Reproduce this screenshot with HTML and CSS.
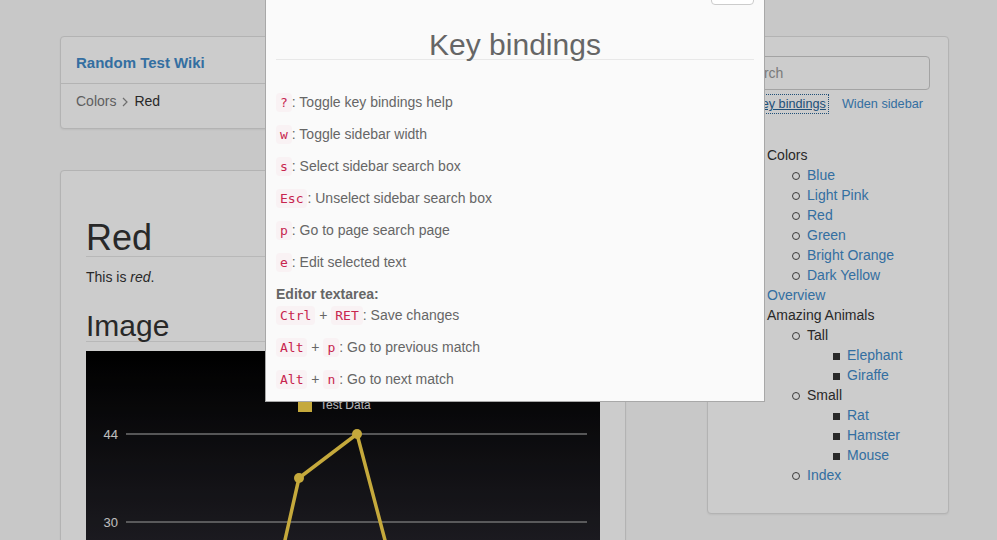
FILE: index.html
```html
<!DOCTYPE html>
<html lang="en">
<head>
<meta charset="utf-8">
<title>Red - Random Test Wiki</title>
<link rel="stylesheet" href="styles.css">
</head>
<body>
<div class="page">
  <main class="main-col">
    <section class="card nav-card">
      <div class="card-head"><a class="brand" href="#">Random Test Wiki</a></div>
      <div class="crumbs">
        <a class="crumb" href="#">Colors</a>
        <svg class="chev" width="6" height="10" viewBox="0 0 6 10"><polyline points="1,1 5,5 1,9" fill="none" stroke="#8a8a8a" stroke-width="1.2"/></svg>
        <span class="current">Red</span>
      </div>
    </section>
    <article class="card content-card">
      <h1 class="page-title">Red</h1>
      <p class="lead-text">This is <em>red</em>.</p>
      <h2 class="section-title">Image</h2>
      <div class="chart">
        <svg width="514" height="320" viewBox="0 0 514 320">
          <defs>
            <linearGradient id="chartbg" gradientUnits="userSpaceOnUse" x1="0" y1="0" x2="0" y2="200">
              <stop offset="0" stop-color="#000000"/>
              <stop offset="1" stop-color="#24232a"/>
            </linearGradient>
          </defs>
          <rect x="0" y="0" width="514" height="320" fill="url(#chartbg)"/>
          <rect x="212" y="47" width="14" height="14" fill="#f7d44b"/>
          <text x="234" y="58" fill="#e6e6e6" font-family="Liberation Sans, Arial, sans-serif" font-size="12">Test Data</text>
          <line x1="40" y1="83" x2="501" y2="83" stroke="#8c8c8c" stroke-width="1.5"/>
          <text x="32" y="88" text-anchor="end" fill="#eeeeee" font-family="Liberation Sans, Arial, sans-serif" font-size="13">44</text>
          <line x1="40" y1="171" x2="501" y2="171" stroke="#8c8c8c" stroke-width="1.5"/>
          <text x="32" y="176" text-anchor="end" fill="#eeeeee" font-family="Liberation Sans, Arial, sans-serif" font-size="13">30</text>
          <polyline points="155,384 213,127 271,83 329,303" fill="none" stroke="#f7d44b" stroke-width="3.5" stroke-linejoin="round"/>
          <circle cx="213" cy="127" r="5" fill="#f7d44b"/>
          <circle cx="271" cy="83" r="5" fill="#f7d44b"/>
        </svg>
      </div>
    </article>
  </main>
  <aside class="card sidebar">
    <input class="search" type="text" placeholder="Search">
    <div class="side-links">
      <a class="side-link focused" href="#">Key bindings</a>
      <a class="side-link" href="#">Widen sidebar</a>
    </div>
    <ul class="tree">
      <li>Colors
        <ul class="lvl2">
          <li><a href="#">Blue</a></li>
          <li><a href="#">Light Pink</a></li>
          <li><a href="#">Red</a></li>
          <li><a href="#">Green</a></li>
          <li><a href="#">Bright Orange</a></li>
          <li><a href="#">Dark Yellow</a></li>
        </ul>
      </li>
      <li><a href="#">Overview</a></li>
      <li>Amazing Animals
        <ul class="lvl2">
          <li>Tall
            <ul class="lvl3">
              <li><a href="#">Elephant</a></li>
              <li><a href="#">Giraffe</a></li>
            </ul>
          </li>
          <li>Small
            <ul class="lvl3">
              <li><a href="#">Rat</a></li>
              <li><a href="#">Hamster</a></li>
              <li><a href="#">Mouse</a></li>
            </ul>
          </li>
          <li><a href="#">Index</a></li>
        </ul>
      </li>
    </ul>
  </aside>
</div>

<div class="backdrop"></div>

<div class="modal">
  <div class="modal-head">
    <button class="close-btn" type="button" aria-label="Close"></button>
    <h2 class="modal-title">Key bindings</h2>
  </div>
  <div class="modal-body">
    <p class="row"><code>?</code>: Toggle key bindings help</p>
    <p class="row"><code>w</code>: Toggle sidebar width</p>
    <p class="row"><code>s</code>: Select sidebar search box</p>
    <p class="row"><code>Esc</code>: Unselect sidebar search box</p>
    <p class="row"><code>p</code>: Go to page search page</p>
    <p class="row"><code>e</code>: Edit selected text</p>
    <div class="group-title">Editor textarea:</div>
    <p class="row first-in-group"><code>Ctrl</code> + <code>RET</code>: Save changes</p>
    <p class="row"><code>Alt</code> + <code>p</code>: Go to previous match</p>
    <p class="row"><code>Alt</code> + <code>n</code>: Go to next match</p>
  </div>
</div>
</body>
</html>
```

FILE: styles.css
```css
html, body {
  margin: 0;
  padding: 0;
  overflow: hidden;
  height: 540px;
}

body {
  background: #fafafa;
  font-family: "Liberation Sans", Arial, sans-serif;
  font-size: 14px;
  line-height: 20px;
  color: #333;
}

a {
  color: #428bca;
  text-decoration: none;
}

.page {
  display: flex;
  align-items: flex-start;
  gap: 81px;
  padding: 36px 48px 0 60px;
}

.main-col {
  width: 566px;
  flex: none;
  display: flex;
  flex-direction: column;
  gap: 41px;
}

.card {
  background: #fff;
  border: 1px solid #e0e0e0;
  border-radius: 4px;
  box-shadow: 0 1px 2px rgba(0, 0, 0, 0.06);
  box-sizing: border-box;
}

/* nav card */
.card-head {
  padding: 16px 15px 10px;
  border-bottom: 1px solid #e0e0e0;
}

.brand {
  font-size: 15px;
  font-weight: bold;
  line-height: 20px;
}

.crumbs {
  display: flex;
  align-items: center;
  padding: 7px 15px 17px;
  line-height: 20px;
}

.crumb {
  color: #777;
}

.chev {
  margin: 1px 6px 0 6px;
}

.current {
  color: #333;
}

/* content card */
.content-card {
  padding: 25px 25px 0;
  height: 420px;
}

.page-title {
  margin: 24px 0 10px;
  font-size: 36px;
  line-height: 36px;
  font-weight: normal;
  border-bottom: 1px solid #e6e6e6;
}

.lead-text {
  margin: 0 0 24px;
}

.section-title {
  margin: 0 0 9px;
  font-size: 30px;
  line-height: 30px;
  font-weight: normal;
  border-bottom: 1px solid #e6e6e6;
}

.chart svg {
  display: block;
}

/* sidebar */
.sidebar {
  width: 242px;
  flex: none;
  padding: 19px 18px 28px;
}

.search {
  display: block;
  width: 100%;
  box-sizing: border-box;
  height: 34px;
  padding: 6px 12px;
  border: 1px solid #ccc;
  border-radius: 4px;
  font-family: "Liberation Sans", Arial, sans-serif;
  font-size: 14px;
  color: #555;
  background: #fff;
}

.search::placeholder {
  color: #999;
}

.side-links {
  display: flex;
  justify-content: flex-end;
  gap: 12px;
  padding-right: 5px;
  margin-top: 5px;
  font-size: 12.7px;
  line-height: 18px;
}

.side-link {
  padding: 0 2px;
}

.side-link.focused {
  color: #2a6496;
  text-decoration: underline;
  outline: 1px dotted #2a6496;
}

.tree {
  list-style: none;
  margin: 32px 0 0;
  padding: 0 0 0 41px;
}

.tree ul {
  list-style: none;
  margin: 0;
  padding: 0 0 0 40px;
}

.lvl2 > li::before {
  content: "";
  display: inline-block;
  box-sizing: border-box;
  width: 8px;
  height: 8px;
  margin: 0 7px 0 -15px;
  border: 1.4px solid #4a4a4a;
  border-radius: 50%;
  vertical-align: middle;
}

.lvl3 > li::before {
  content: "";
  display: inline-block;
  width: 7px;
  height: 7px;
  margin: 0 7px 0 -14px;
  background: #333;
  vertical-align: middle;
}

/* overlay */
.backdrop {
  position: fixed;
  inset: 0;
  background: rgba(0, 0, 0, 0.2);
}

.modal {
  position: absolute;
  top: -40px;
  left: 265px;
  width: 500px;
  box-sizing: border-box;
  background: #fafafa;
  border: 1px solid #a8a8a8;
  padding: 10px 10px 0;
  color: #666;
}

.modal-head {
  display: flex;
  flex-direction: column;
  align-items: flex-end;
}

.close-btn {
  width: 43px;
  height: 34px;
  padding: 0;
  background: #fff;
  border: 1px solid #ccc;
  border-radius: 4px;
}

.modal-title {
  align-self: stretch;
  margin: 25px 0 0;
  font-size: 30px;
  line-height: 29px;
  font-weight: normal;
  text-align: center;
  color: #666;
  border-bottom: 1px solid #e8e8e8;
}

.modal-body {
  padding-top: 32px;
}

.row {
  margin: 0 0 12px;
  height: 20px;
  line-height: 20px;
}

.row.first-in-group {
  margin-top: 1px;
}

.group-title {
  font-weight: bold;
  line-height: 20px;
}

code {
  font-family: "DejaVu Sans Mono", monospace;
  font-size: 13px;
  line-height: 13px;
  padding: 2px 4px;
  color: #c7254e;
  background: #f9f2f4;
  border-radius: 4px;
}
```
